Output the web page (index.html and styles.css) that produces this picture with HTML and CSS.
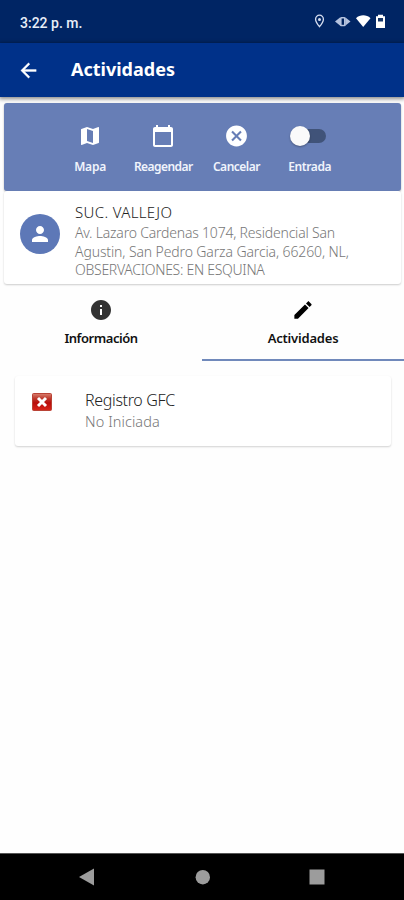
FILE: index.html
```html
<!DOCTYPE html>
<html lang="es">
<head>
<meta charset="utf-8">
<meta name="viewport" content="width=device-width">
<title>Actividades</title>
<link rel="stylesheet" href="styles.css">
</head>
<body>
<div class="status">
  <span class="time">3:22 p. m.</span>
  <svg class="status-icons" width="74" height="18" viewBox="0 0 74 18">
    <path d="M6.500 2.200a3.900 3.900 0 0 0-3.900 4c0 2.800 3.900 7.500 3.900 7.500s3.900-4.700 3.900-7.500a3.900 3.900 0 0 0-3.900-4z" fill="none" stroke="#d5def0" stroke-width="1.300"/>
    <circle cx="6.500" cy="6.600" r="1.500" fill="#d5def0"/>
    <path d="M22 8.500l5-4v8zM37.500 8.500l-5-4v8z" fill="#b5c3df"/>
    <rect x="26.800" y="4" width="6" height="9.300" rx="1.500" fill="#b5c3df"/>
    <rect x="28.600" y="5.500" width="2.400" height="6.300" fill="#00245f"/>
    <path d="M43 5.200c4-3.800 10.500-3.800 14.500 0L50.200 14z" fill="#fff"/>
    <path d="M65 1.700h5v1.500h2v11.800h-9V3.200h2z" fill="#fff"/>
    <rect x="65" y="5" width="5" height="3.500" fill="#173668"/>
  </svg>
</div>
<header class="appbar">
  <svg class="back" width="24" height="24" viewBox="0 0 24 24"><path d="M20 11H7.830l5.590-5.590L12 4l-8 8 8 8 1.410-1.410L7.830 13H20z" fill="#fff" stroke="#fff" stroke-width=".4"/></svg>
  <h1 class="title">Actividades</h1>
</header>
<main class="content">
  <section class="toolbar">
    <div class="tool">
      <svg width="24" height="24" viewBox="0 0 24 24"><path d="M20.500 3l-.16.030L15 5.100 9 3 3.360 4.900c-.21.070-.36.250-.36.480V20.500c0 .28.220.5.500.5l.16-.03L9 18.900l6 2.100 5.640-1.900c.21-.07.360-.25.360-.48V3.500c0-.28-.22-.5-.5-.5zM15 19l-6-2.110V5l6 2.110V19z" fill="#fff"/></svg>
      <span class="label mapa">Mapa</span>
    </div>
    <div class="tool">
      <svg width="24" height="24" viewBox="0 0 24 24"><path d="M20 3h-1V1h-2v2H7V1H5v2H4c-1.100 0-2 .9-2 2v16c0 1.100.9 2 2 2h16c1.100 0 2-.9 2-2V5c0-1.100-.9-2-2-2zm0 18H4V8h16v13z" fill="#fff"/></svg>
      <span class="label reagendar">Reagendar</span>
    </div>
    <div class="tool">
      <svg width="25" height="25" viewBox="0 0 24 24"><path d="M12 2C6.470 2 2 6.470 2 12s4.470 10 10 10 10-4.470 10-10S17.530 2 12 2zm5 13.590L15.590 17 12 13.410 8.410 17 7 15.590 10.590 12 7 8.410 8.410 7 12 10.590 15.590 7 17 8.410 13.410 12 17 15.590z" fill="#fff"/></svg>
      <span class="label cancelar">Cancelar</span>
    </div>
    <div class="tool">
      <span class="switch"><span class="knob"></span></span>
      <span class="label entrada">Entrada</span>
    </div>
  </section>
  <section class="client">
    <div class="avatar"><svg width="24" height="24" viewBox="0 0 24 24"><path d="M12 12c2.210 0 4-1.790 4-4s-1.790-4-4-4-4 1.790-4 4 1.790 4 4 4zm0 2c-2.670 0-8 1.340-8 4v2h16v-2c0-2.660-5.330-4-8-4z" fill="#fff"/></svg></div>
    <div class="client-text">
      <div><span class="name">SUC. VALLEJO</span></div>
      <div><span class="addr a1">Av. Lazaro Cardenas 1074, Residencial San</span></div>
      <div><span class="addr a2">Agustin, San Pedro Garza Garcia, 66260, NL,</span></div>
      <div><span class="addr a3">OBSERVACIONES: EN ESQUINA</span></div>
    </div>
  </section>
  <nav class="tabs">
    <div class="tab">
      <svg width="24" height="24" viewBox="0 0 24 24"><path d="M12 2C6.480 2 2 6.480 2 12s4.480 10 10 10 10-4.480 10-10S17.520 2 12 2zm1 15h-2v-6h2v6zm0-8h-2V7h2v2z" fill="#333"/></svg>
      <span class="tab-label t1">Información</span>
    </div>
    <div class="tab active">
      <svg width="24" height="24" viewBox="-.5 -.5 25 25"><path d="M3 17.250V21h3.750L17.810 9.940l-3.750-3.750L3 17.250zM20.710 7.040c.39-.39.390-1.020 0-1.410l-2.340-2.340c-.39-.39-1.020-.39-1.410 0l-1.830 1.830 3.750 3.750 1.830-1.830z" fill="#000"/></svg>
      <span class="tab-label t2">Actividades</span>
    </div>
  </nav>
  <section class="activity">
    <svg class="cross" width="20" height="18" viewBox="0 0 20 18">
      <defs><linearGradient id="red" x1="0" y1="0" x2="0" y2="1"><stop offset="0" stop-color="#d9806f"/><stop offset=".3" stop-color="#bd382c"/><stop offset=".55" stop-color="#b80d0b"/><stop offset="1" stop-color="#d9261b"/></linearGradient></defs>
      <rect x=".5" y=".5" width="19" height="17" rx="1" fill="url(#red)" stroke="#b94336"/>
      <path d="M6 5l8 8M14 5l-8 8" stroke="#fff" stroke-width="3"/>
    </svg>
    <div class="activity-text">
      <div><span class="act-name">Registro GFC</span></div>
      <div><span class="act-state">No Iniciada</span></div>
    </div>
  </section>
</main>
<footer class="navbar">
  <svg width="404" height="46" viewBox="0 0 404 46" fill="#9c9c9c"><path d="M79 23l15-8.500v17z"/><circle cx="202.800" cy="23.200" r="7.200"/><rect x="309.500" y="15.500" width="15" height="15"/></svg>
</footer>
</body>
</html>
```
FILE: styles.css
```css
* { box-sizing: border-box; }
body {
  margin: 0;
  width: 404px;
  height: 900px;
  overflow: hidden;
  display: flex;
  flex-direction: column;
  background: #fefefe;
  font-family: "Noto Sans", "Open Sans", sans-serif;
}
svg { display: block; flex: none; }
span { display: inline-block; white-space: nowrap; }
.status {
  height: 43px;
  flex: none;
  background: #002564;
  display: flex;
  justify-content: space-between;
  padding: 13px 17px 0 20px;
}
.time { color: #e8eef8; font: 500 14px/20px Roboto, sans-serif; }
.appbar {
  height: 54px;
  flex: none;
  background: #003189;
  display: flex;
  align-items: center;
  padding-left: 17px;
  box-shadow: 0 1px 4px 1px rgba(0, 0, 0, .45);
}
.back { width: 23px; height: 23px; margin-top: 1px; }
.title { margin: -3px 0 0 31px; color: #fff; font-size: 18px; line-height: 26px; font-weight: 700; letter-spacing: 0; }
.content { flex: 1; }
.toolbar {
  height: 88px;
  margin: 6px 3px 0 4px;
  border-radius: 3px;
  background: #677eb6;
  box-shadow: 0 1px 2px rgba(0, 0, 0, .3);
  display: grid;
  grid-template-columns: repeat(4, 73.200px);
  padding: 20px 0 0 49.500px;
}
.tool { display: flex; flex-direction: column; align-items: center; }
.tool svg { height: 26px; }
.label { margin-top: 9px; color: #f0f4fc; font-size: 12px; line-height: 18px; font-weight: 600; }
.mapa { letter-spacing: -.2px; }
.reagendar { letter-spacing: -.55px; }
.cancelar { letter-spacing: -.5px; }
.entrada { letter-spacing: -.4px; }
.switch { width: 36px; height: 14px; margin: 6px 0; border-radius: 7px; background: linear-gradient(90deg, transparent 14px, #405379 14px); position: relative; left: -1.500px; }
.knob { position: absolute; left: 0; top: -3px; width: 20px; height: 20px; border-radius: 50%; background: #fafafa; box-shadow: 0 1px 2px rgba(0, 0, 0, .3); }
.client {
  height: 93px;
  margin: 0 3px 0 4px;
  padding: 10px 0 0 16px;
  border-radius: 3px;
  background: #fff;
  box-shadow: 0 1px 2px rgba(0, 0, 0, .2);
  display: flex;
}
.avatar { width: 40px; height: 40px; margin-top: 13px; border-radius: 50%; background: #5d78b7; display: grid; place-items: center; flex: none; }
.client-text { margin-left: 15px; }
.client-text div { height: 18.500px; }
.client-text div:first-child { height: 20px; }
.name { font-size: 15px; line-height: 20px; font-weight: 300; color: #222; letter-spacing: .35px; }
.addr { font-size: 14px; line-height: 19px; font-weight: 300; color: #777; }
.a1 { letter-spacing: -.2px; }
.a2 { letter-spacing: -.12px; }
.a3 { letter-spacing: -.28px; }
.tabs { height: 77px; display: grid; grid-template-columns: 1fr 1fr; }
.tab { display: flex; flex-direction: column; align-items: center; padding-top: 14px; }
.tab-label { margin-top: 6px; font-size: 13px; line-height: 20px; font-weight: 600; color: #111; }
.t1 { letter-spacing: -.45px; }
.t2 { letter-spacing: -.2px; }
.active { border-bottom: 2px solid #7089bb; }
.activity {
  height: 70px;
  margin: 15px 13px 0 15px;
  padding: 13px 0 0 17px;
  border-radius: 3px;
  background: #fff;
  box-shadow: 0 1px 2px rgba(0, 0, 0, .18);
  display: flex;
}
.cross { margin-top: 4px; }
.activity-text { margin-left: 33px; }
.activity-text div { height: 21px; }
.act-name { font-size: 16px; line-height: 20px; font-weight: 300; color: #222; letter-spacing: -.33px; }
.act-state { font-size: 14.500px; line-height: 20px; font-weight: 300; color: #777; letter-spacing: .08px; }
.navbar { height: 47px; flex: none; background: #000; border-top: 1px solid #555; }
```
